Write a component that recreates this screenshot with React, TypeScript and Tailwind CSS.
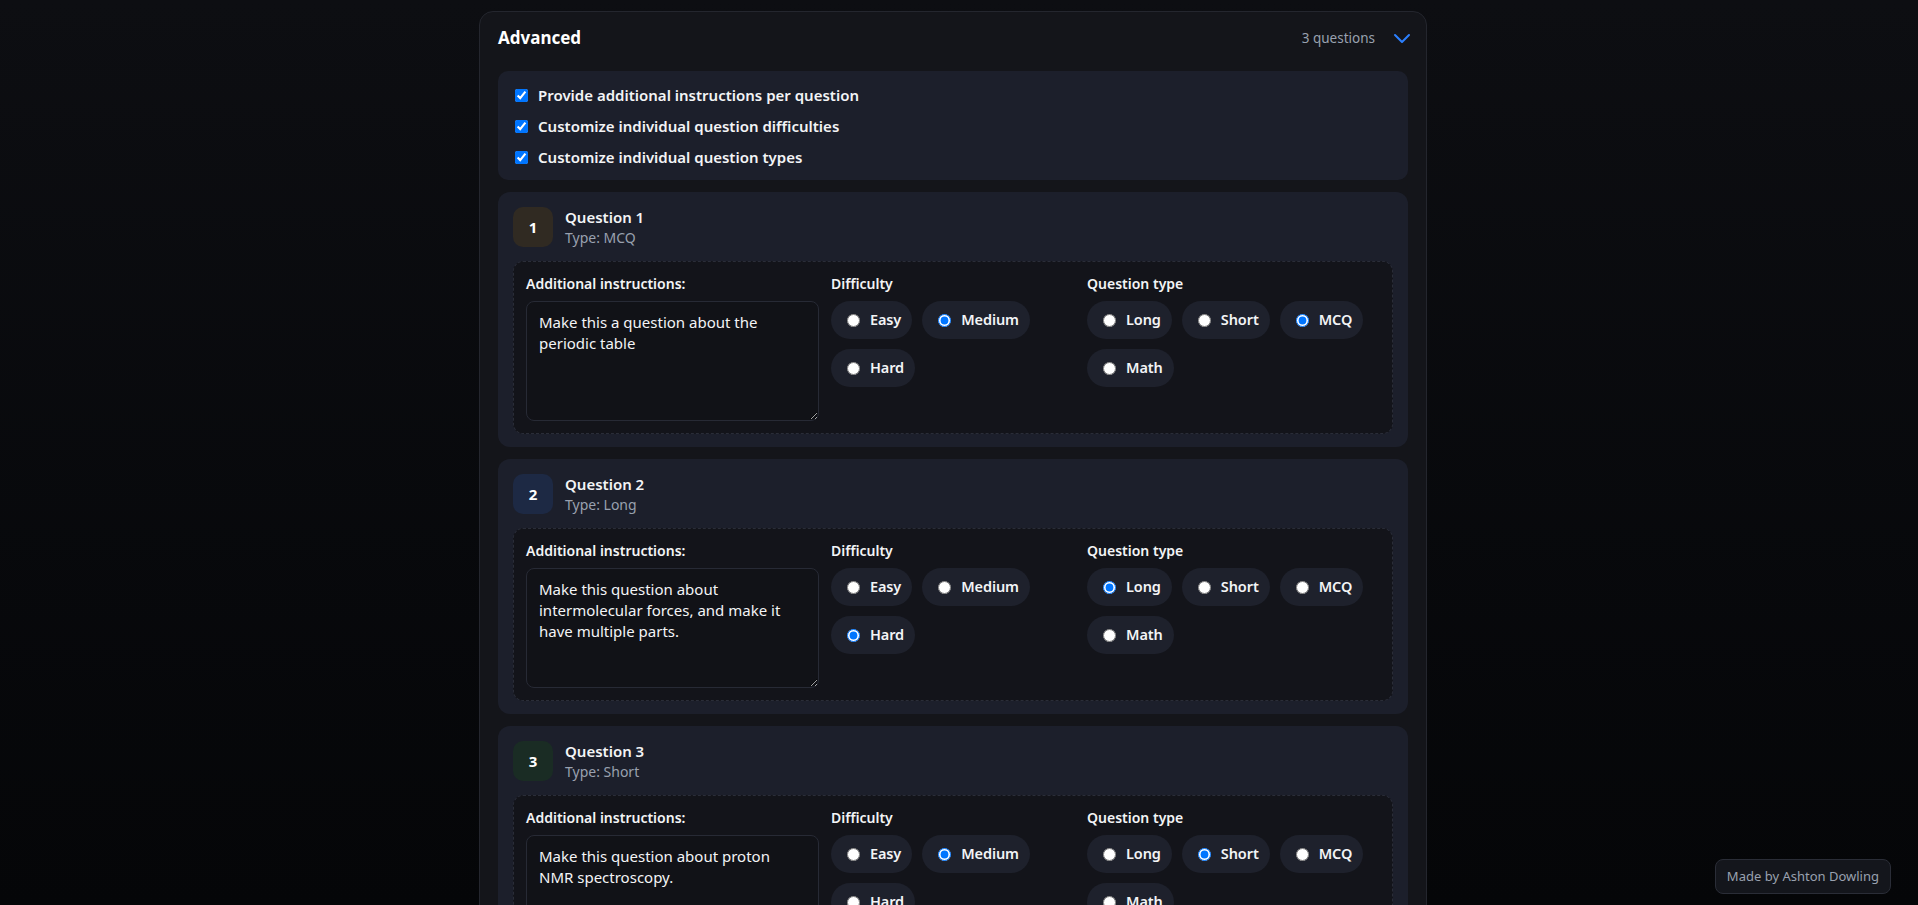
import { useState } from "react";

type Difficulty = "Easy" | "Medium" | "Hard";
type QType = "Long" | "Short" | "MCQ" | "Math";

type Question = {
  id: number;
  instructions: string;
  difficulty: Difficulty;
  type: QType;
  badge: string;
};

const difficulties: Difficulty[] = ["Easy", "Medium", "Hard"];
const types: QType[] = ["Long", "Short", "MCQ", "Math"];

const startQuestions: Question[] = [
  {
    id: 1,
    instructions: "Make this a question about the periodic table",
    difficulty: "Medium",
    type: "MCQ",
    badge: "bg-[#302a22]",
  },
  {
    id: 2,
    instructions:
      "Make this question about intermolecular forces, and make it have multiple parts.",
    difficulty: "Hard",
    type: "Long",
    badge: "bg-[#1d2944]",
  },
  {
    id: 3,
    instructions: "Make this question about proton NMR spectroscopy.",
    difficulty: "Medium",
    type: "Short",
    badge: "bg-[#1a2c24]",
  },
];

function Pill({
  name,
  label,
  checked,
  onPick,
}: {
  name: string;
  label: string;
  checked: boolean;
  onPick: () => void;
}) {
  return (
    <label className="flex h-[38px] cursor-pointer items-center gap-2.5 rounded-full bg-[#1e212c] pl-4 pr-[11px] text-[14.5px] font-semibold tracking-[-0.1px] text-gray-100">
      <input
        type="radio"
        name={name}
        checked={checked}
        onChange={onPick}
        className="m-0 h-[13px] w-[13px]"
      />
      {label}
    </label>
  );
}

export default function App() {
  const [options, setOptions] = useState([true, true, true]);
  const [questions, setQuestions] = useState(startQuestions);

  const optionLabels = [
    "Provide additional instructions per question",
    "Customize individual question difficulties",
    "Customize individual question types",
  ];

  const update = (id: number, patch: Partial<Question>) =>
    setQuestions(questions.map((q) => (q.id === id ? { ...q, ...patch } : q)));

  return (
    <div className="relative h-screen bg-linear-to-b from-[#0d0e12] to-[#050608] font-['Noto_Sans',sans-serif]">
      <div className="h-full overflow-y-auto">
        <div className="pt-[11px] pr-3 pb-10">
          <div className="mx-auto w-[948px] rounded-[14px] border border-[#24262e] bg-[#14151a] px-[18px] pt-3 pb-[18px]">
            <div className="mb-[19px] flex h-7 items-center justify-between">
              <h2 className="text-[17px] font-bold text-white">Advanced</h2>
              <div className="-mr-1.5 flex items-center gap-[15px]">
                <span className="text-[13.5px] text-gray-400">
                  {questions.length} questions
                </span>
                <svg
                  className="h-6 w-6 text-blue-500"
                  viewBox="0 0 24 24"
                  fill="none"
                  stroke="currentColor"
                  strokeWidth={2}
                  strokeLinecap="round"
                  strokeLinejoin="round"
                >
                  <path d="M19 9l-7 7-7-7" />
                </svg>
              </div>
            </div>

            <div className="flex flex-col gap-3">
              <div className="flex flex-col gap-[7px] rounded-[10px] bg-[#1c1f2b] pt-3 pb-[11px] pl-[17px]">
                {optionLabels.map((text, i) => (
                  <label
                    key={text}
                    className="flex h-6 cursor-pointer items-center gap-2.5 text-[15px] font-semibold text-gray-100"
                  >
                    <input
                      type="checkbox"
                      checked={options[i]}
                      onChange={() =>
                        setOptions(options.map((o, j) => (j === i ? !o : o)))
                      }
                      className="m-0 h-[13px] w-[13px]"
                    />
                    {text}
                  </label>
                ))}
              </div>

              {questions.map((q) => (
                <div
                  key={q.id}
                  className="rounded-[12px] bg-[#1c1f2b] px-[15px] pt-[15px] pb-[13px]"
                >
                  <div className="mb-[14px] flex items-center gap-3">
                    <div
                      className={`flex h-10 w-10 items-center justify-center rounded-[10px] text-[15px] font-bold text-white ${q.badge}`}
                    >
                      {q.id}
                    </div>
                    <div>
                      <div className="text-[15px] leading-[21px] font-semibold text-gray-100">
                        Question {q.id}
                      </div>
                      <div className="text-[14px] leading-[19px] text-gray-400">
                        Type: {q.type}
                      </div>
                    </div>
                  </div>

                  <div className="grid grid-cols-[1.2fr_1fr_1.2fr] gap-3 rounded-[10px] border border-dashed border-[#2a2d38] bg-[#13141a] p-3">
                    <div>
                      <div className="mb-[7px] text-[14px] leading-5 font-semibold text-gray-100">
                        Additional instructions:
                      </div>
                      <textarea
                        value={q.instructions}
                        onChange={(e) =>
                          update(q.id, { instructions: e.target.value })
                        }
                        className="block h-[120px] w-full rounded-[8px] border border-[#272a35] bg-[#111217] px-3 py-2.5 text-[15px] leading-[21px] text-gray-100 outline-none"
                      />
                    </div>
                    <div>
                      <div className="mb-[7px] text-[14px] leading-5 font-semibold text-gray-100">
                        Difficulty
                      </div>
                      <div className="flex flex-wrap gap-2.5">
                        {difficulties.map((d) => (
                          <Pill
                            key={d}
                            name={`difficulty-${q.id}`}
                            label={d}
                            checked={q.difficulty === d}
                            onPick={() => update(q.id, { difficulty: d })}
                          />
                        ))}
                      </div>
                    </div>
                    <div>
                      <div className="mb-[7px] text-[14px] leading-5 font-semibold text-gray-100">
                        Question type
                      </div>
                      <div className="flex flex-wrap gap-2.5">
                        {types.map((t) => (
                          <Pill
                            key={t}
                            name={`type-${q.id}`}
                            label={t}
                            checked={q.type === t}
                            onPick={() => update(q.id, { type: t })}
                          />
                        ))}
                      </div>
                    </div>
                  </div>
                </div>
              ))}
            </div>
          </div>
        </div>
      </div>

      <div className="absolute right-[27px] bottom-[11px] rounded-lg border border-[#2a2d37] bg-[#14161c] px-[11px] py-[7px] text-[13px] text-gray-400">
        Made by Ashton Dowling
      </div>
    </div>
  );
}
